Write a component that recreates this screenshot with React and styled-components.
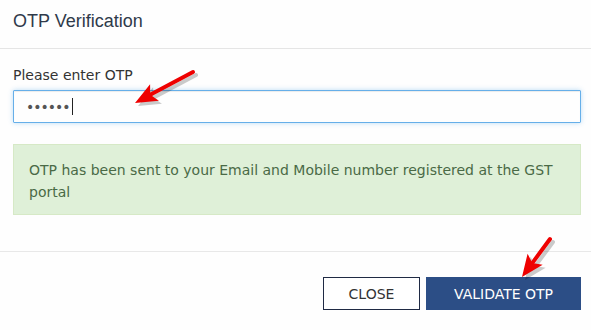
import React from 'react'
import styled, { createGlobalStyle } from 'styled-components'

const GlobalStyle = createGlobalStyle`
  html, body {
    margin: 0;
    padding: 0;
    background: #ffffff;
  }
`

const Modal = styled.div`
  position: relative;
  width: 591px;
  height: 330px;
  background: #fefefe;
  font-family: 'DejaVu Sans', Verdana, sans-serif;
  color: #333333;
  overflow: hidden;
`

const Header = styled.div`
  height: 49px;
  box-sizing: border-box;
  padding: 10px 13px 0;
  border-bottom: 1px solid #e5e5e5;
`

const Title = styled.h4`
  margin: 0;
  font-family: 'Liberation Sans', Arial, sans-serif;
  font-weight: 400;
  font-size: 18px;
  line-height: 22px;
  color: #2f3a4a;
`

const Body = styled.div`
  padding: 17px 10px 0 13px;
  height: 203px;
  box-sizing: border-box;
  border-bottom: 1px solid #e8e8e8;
`

const Label = styled.label`
  display: block;
  font-size: 14px;
  line-height: 18px;
  color: #333333;
  margin-bottom: 6px;
`

const Input = styled.div`
  height: 33px;
  box-sizing: border-box;
  border: 1px solid #66afe9;
  border-radius: 1px;
  box-shadow: inset 0 1px 1px rgba(0, 0, 0, 0.075), 0 0 5px rgba(102, 175, 233, 0.45);
  display: flex;
  align-items: center;
  padding-left: 12px;
  font-size: 14px;
  color: #555555;
  letter-spacing: -1px;
`

const Caret = styled.span`
  display: inline-block;
  width: 1px;
  height: 17px;
  background: #222;
  margin-left: 2px;
`

const Alert = styled.div`
  margin-top: 21px;
  height: 71px;
  box-sizing: border-box;
  background: #dff0d8;
  border: 1px solid #d6e9c6;
  padding: 14px 15px;
  font-size: 14px;
  line-height: 22px;
  color: #4a6a46;
`

const Footer = styled.div`
  display: flex;
  justify-content: flex-end;
  gap: 6px;
  padding: 25px 10px 0 0;
`

const Button = styled.button`
  height: 33px;
  box-sizing: border-box;
  padding: 0;
  width: ${(p) => (p.primary ? '155px' : '97px')};
  font-family: 'DejaVu Sans', Verdana, sans-serif;
  font-size: 14px;
  border-radius: 0;
  border: 1px solid ${(p) => (p.primary ? '#2c4e86' : '#1f2a44')};
  background: ${(p) => (p.primary ? '#2c4e86' : '#ffffff')};
  color: ${(p) => (p.primary ? '#ffffff' : '#333333')};
`

const Arrow = styled.svg`
  position: absolute;
  left: 0;
  top: 0;
  pointer-events: none;
`

const RedArrow = ({ x1, y1, x2, y2 }) => {
  const ang = Math.atan2(y2 - y1, x2 - x1)
  const len = 24
  const spread = 0.4
  const bx = x2 - Math.cos(ang) * len * 0.72
  const by = y2 - Math.sin(ang) * len * 0.72
  const p1 = [x2 - Math.cos(ang - spread) * len, y2 - Math.sin(ang - spread) * len]
  const p2 = [x2 - Math.cos(ang + spread) * len, y2 - Math.sin(ang + spread) * len]
  const head = `${x2},${y2} ${p1[0]},${p1[1]} ${bx},${by} ${p2[0]},${p2[1]}`
  return (
    <g>
      <g transform="translate(3,3)" opacity="0.2" fill="#000">
        <line x1={x1} y1={y1} x2={bx} y2={by} stroke="#000" strokeWidth="4" strokeLinecap="round" />
        <polygon points={head} />
      </g>
      <line x1={x1} y1={y1} x2={bx} y2={by} stroke="#ee0000" strokeWidth="4" strokeLinecap="round" />
      <polygon points={head} fill="#ee0000" />
    </g>
  )
}

export default function App() {
  return (
    <>
      <GlobalStyle />
      <Modal>
        <Header>
          <Title>OTP Verification</Title>
        </Header>
        <Body>
          <Label>Please enter OTP</Label>
          <Input>
            ••••••
            <Caret />
          </Input>
          <Alert>
            OTP has been sent to your Email and Mobile number registered at the GST portal
          </Alert>
        </Body>
        <Footer>
          <Button>CLOSE</Button>
          <Button primary>VALIDATE OTP</Button>
        </Footer>
        <Arrow width="591" height="330">
          <RedArrow x1={193} y1={72} x2={135} y2={103} />
          <RedArrow x1={550} y1={239} x2={522} y2={277} />
        </Arrow>
      </Modal>
    </>
  )
}
